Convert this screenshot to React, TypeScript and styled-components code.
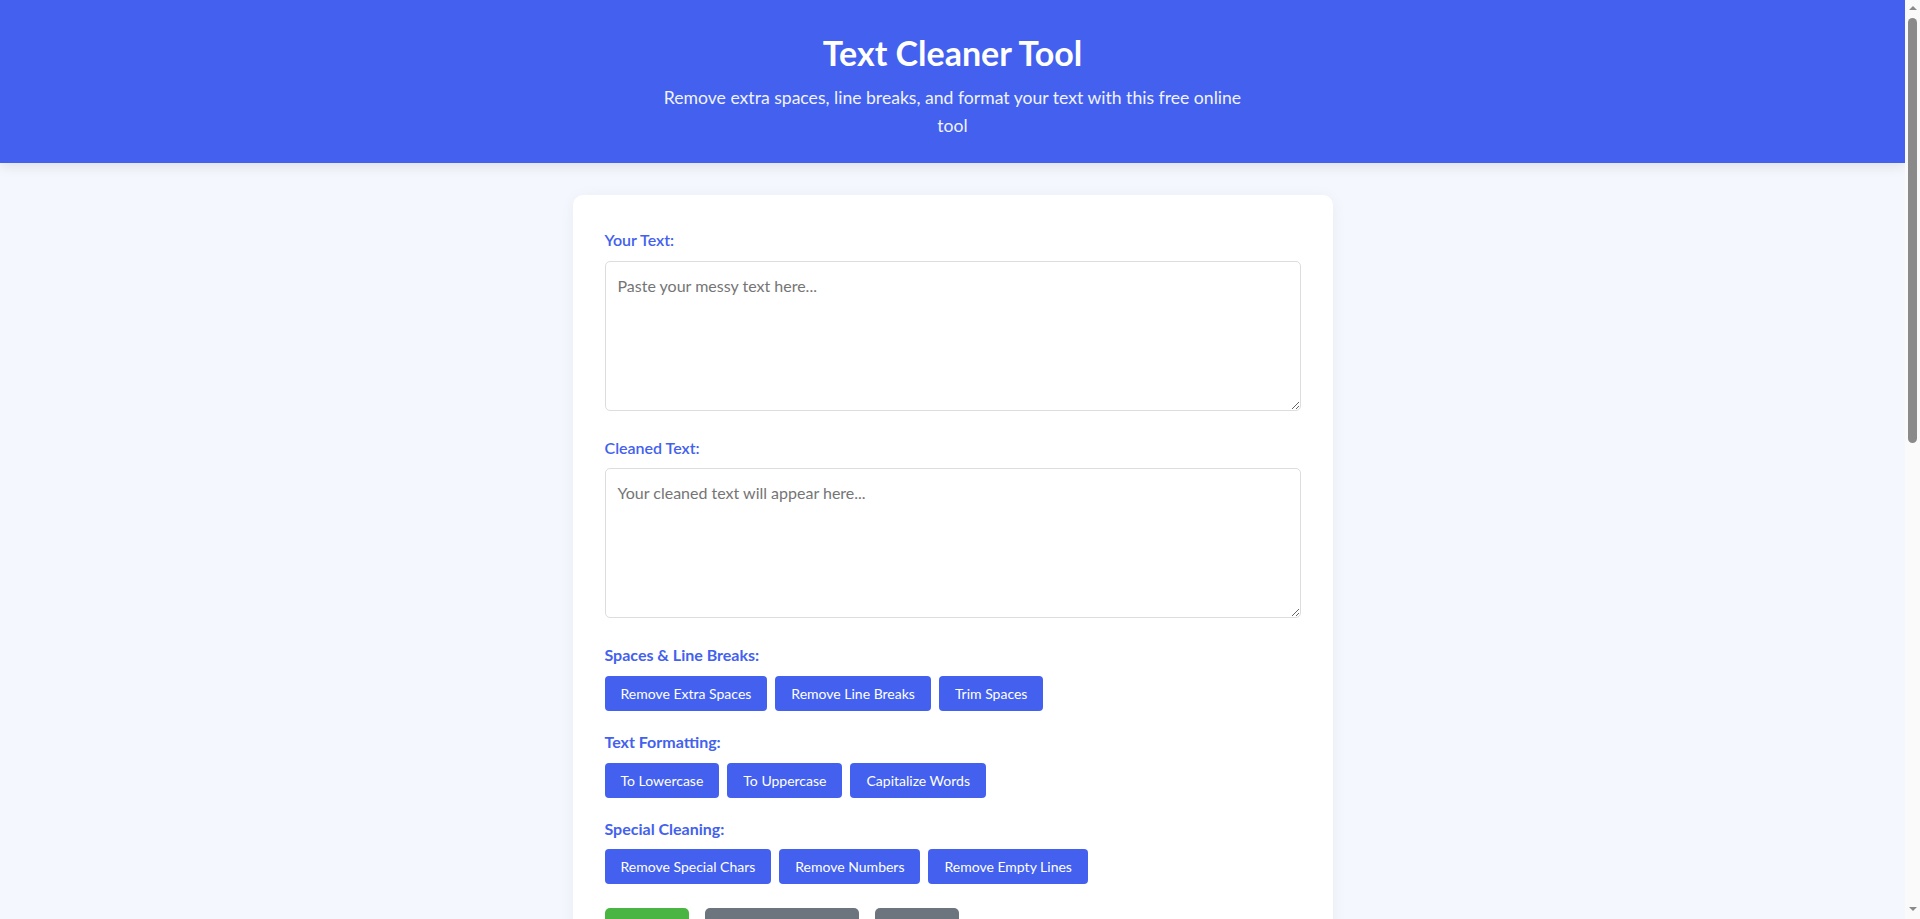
import styled, { createGlobalStyle } from "styled-components";

const GlobalStyle = createGlobalStyle`
    body {
        margin: 0;
        padding-right: 15px;
        background-color: #f5f7ff;
        font-family: Lato, "Liberation Sans", sans-serif;
        color: #333;
    }
`

const Header = styled.header`
    background-color: #4361ee;
    color: white;
    text-align: center;
    padding: 34px 20px 23px;
    box-shadow: 0 3px 12px rgba(0, 0, 0, 0.1);
`

const Title = styled.h1`
    margin: 0 0 12px;
    font-size: 34px;
    line-height: 38px;
    font-weight: 700;
`

const Subtitle = styled.p`
    margin: 0 auto;
    max-width: 600px;
    font-size: 17.6px;
    line-height: 1.6;
    opacity: 0.92;
`

const Card = styled.main`
    width: 760px;
    box-sizing: border-box;
    margin: 32px auto;
    padding: 32px;
    background-color: white;
    border-radius: 10px;
    box-shadow: 0 2px 15px rgba(0, 0, 0, 0.05);
`

const FormGroup = styled.div`
    margin-bottom: 24px;
`

const Label = styled.label`
    display: block;
    margin-bottom: 8px;
    font-size: 16px;
    line-height: 1.6;
    font-weight: 600;
    color: #4361ee;
`

const TextArea = styled.textarea`
    display: block;
    width: 100%;
    height: 150px;
    box-sizing: border-box;
    padding: 12px;
    border: 1px solid #ddd;
    border-radius: 5px;
    font-family: inherit;
    font-size: 16px;
    line-height: 1.5;
    resize: vertical;
    &::placeholder {
        color: #757575;
    }
`

const Section = styled.section`
    margin-bottom: 18px;
`

const SectionTitle = styled.h3`
    margin: 0 0 8px;
    font-size: 16px;
    line-height: 1.6;
    font-weight: 700;
    color: #4361ee;
`

const ButtonGroup = styled.div`
    display: flex;
    flex-wrap: wrap;
    gap: 8px;
`

const ToolButton = styled.button`
    background-color: #4361ee;
    color: white;
    border: none;
    border-radius: 4px;
    padding: 8px 16px;
    font-family: inherit;
    font-size: 14px;
    line-height: 19px;
    cursor: pointer;
`

const ActionRow = styled.div`
    display: flex;
    gap: 16px;
    padding-top: 6px;
`

const ActionButton = styled.button<{ $variant: "green" | "gray" }>`
    background-color: ${(p) => (p.$variant === "green" ? "#4bb543" : "#6c757d")};
    color: white;
    border: none;
    border-radius: 5px;
    padding: 12px 24px;
    font-family: inherit;
    font-size: 16px;
    line-height: 20px;
    cursor: pointer;
`

// classic window scrollbar drawn over the right edge
const ScrollTrack = styled.div`
    position: fixed;
    top: 0;
    right: 0;
    width: 15px;
    height: 100vh;
    background-color: #fafafa;
    display: flex;
    flex-direction: column;
    align-items: center;
`

const Arrow = styled.div<{ $down?: boolean }>`
    width: 0;
    height: 0;
    margin: ${(p) => (p.$down ? "auto 0 8px" : "6px 0 0")};
    border-left: 4px solid transparent;
    border-right: 4px solid transparent;
    ${(p) => (p.$down ? "border-top: 4px solid #8a8a8a;" : "border-bottom: 4px solid #8a8a8a;")}
`

const Thumb = styled.div`
    width: 9px;
    height: 425px;
    margin-top: 8px;
    background-color: #8a8a8a;
    border-radius: 5px;
`

const sections = [
    { title: "Spaces & Line Breaks:", buttons: ["Remove Extra Spaces", "Remove Line Breaks", "Trim Spaces"] },
    { title: "Text Formatting:", buttons: ["To Lowercase", "To Uppercase", "Capitalize Words"] },
    { title: "Special Cleaning:", buttons: ["Remove Special Chars", "Remove Numbers", "Remove Empty Lines"] },
]

const App = () => {
    return (
        <>
            <GlobalStyle />
            <Header>
                <Title>Text Cleaner Tool</Title>
                <Subtitle>Remove extra spaces, line breaks, and format your text with this free online tool</Subtitle>
            </Header>
            <Card>
                <FormGroup>
                    <Label htmlFor="input">Your Text:</Label>
                    <TextArea id="input" placeholder="Paste your messy text here..." />
                </FormGroup>
                <FormGroup>
                    <Label htmlFor="output">Cleaned Text:</Label>
                    <TextArea id="output" placeholder="Your cleaned text will appear here..." readOnly />
                </FormGroup>

                {sections.map((s) => (
                    <Section key={s.title}>
                        <SectionTitle>{s.title}</SectionTitle>
                        <ButtonGroup>
                            {s.buttons.map((b) => (
                                <ToolButton key={b}>{b}</ToolButton>
                            ))}
                        </ButtonGroup>
                    </Section>
                ))}

                <ActionRow>
                    <ActionButton $variant="green">Copy</ActionButton>
                    <ActionButton $variant="gray">Download Text</ActionButton>
                    <ActionButton $variant="gray">Clear</ActionButton>
                </ActionRow>
            </Card>
            <ScrollTrack>
                <Arrow />
                <Thumb />
                <Arrow $down />
            </ScrollTrack>
        </>
    );
}

export default App;
